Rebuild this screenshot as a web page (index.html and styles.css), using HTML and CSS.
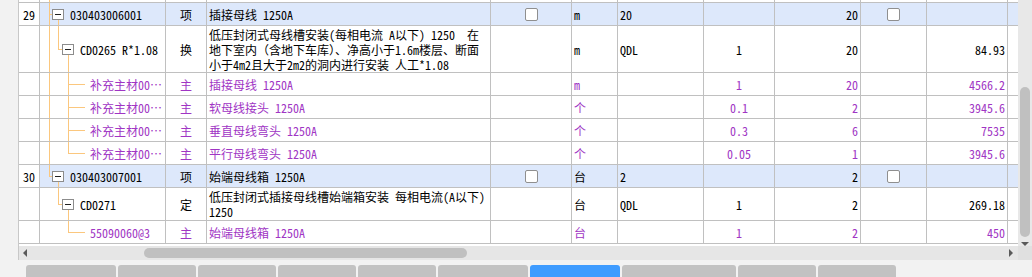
FILE: index.html
```html
<!DOCTYPE html>
<html lang="zh-CN">
<head>
<meta charset="utf-8">
<title>清单</title>
<link rel="stylesheet" href="styles.css">
</head>
<body>
<div class="app">
  <div class="gutter"></div>
  <div class="pane">
    <div class="main">
      <div class="viewport">
        <div class="grid">
          <div class="row sliver">
            <div class="c"></div><div class="c t-pass"></div><div class="c"></div><div class="c"></div><div class="c"></div><div class="c"></div><div class="c"></div><div class="c"></div><div class="c"></div><div class="c"></div><div class="c"></div><div class="c"></div>
          </div>

          <div class="row hl">
            <div class="c num">29</div>
            <div class="c tree l1 t-n1"><span class="box"></span><span>030403006001</span></div>
            <div class="c ctr">项</div>
            <div class="c">插接母线 1250A</div>
            <div class="c ctr"><span class="chk"></span></div>
            <div class="c">m</div>
            <div class="c">20</div>
            <div class="c ctr"></div>
            <div class="c rt">20</div>
            <div class="c ctr"><span class="chk"></span></div>
            <div class="c rt"></div>
            <div class="c"></div>
          </div>

          <div class="row r47">
            <div class="c num"></div>
            <div class="c tree l2 t-n2"><span class="box"></span><span>CD0265 R*1.08</span></div>
            <div class="c ctr">换</div>
            <div class="c wrap">低压封闭式母线槽安装(每相电流 A以下) 1250&nbsp;&nbsp;在<br>地下室内（含地下车库）、净高小于1.6m楼层、断面<br>小于4m2且大于2m2的洞内进行安装 人工*1.08</div>
            <div class="c"></div>
            <div class="c">m</div>
            <div class="c">QDL</div>
            <div class="c ctr">1</div>
            <div class="c rt">20</div>
            <div class="c"></div>
            <div class="c rt">84.93</div>
            <div class="c"></div>
          </div>

          <div class="row mat">
            <div class="c num"></div>
            <div class="c tree l3 t-leaf">补充主材00…</div>
            <div class="c ctr">主</div>
            <div class="c">插接母线 1250A</div>
            <div class="c"></div>
            <div class="c">m</div>
            <div class="c"></div>
            <div class="c ctr">1</div>
            <div class="c rt">20</div>
            <div class="c"></div>
            <div class="c rt">4566.2</div>
            <div class="c"></div>
          </div>

          <div class="row mat">
            <div class="c num"></div>
            <div class="c tree l3 t-leaf">补充主材00…</div>
            <div class="c ctr">主</div>
            <div class="c">软母线接头 1250A</div>
            <div class="c"></div>
            <div class="c">个</div>
            <div class="c"></div>
            <div class="c ctr">0.1</div>
            <div class="c rt">2</div>
            <div class="c"></div>
            <div class="c rt">3945.6</div>
            <div class="c"></div>
          </div>

          <div class="row mat">
            <div class="c num"></div>
            <div class="c tree l3 t-leaf">补充主材00…</div>
            <div class="c ctr">主</div>
            <div class="c">垂直母线弯头 1250A</div>
            <div class="c"></div>
            <div class="c">个</div>
            <div class="c"></div>
            <div class="c ctr">0.3</div>
            <div class="c rt">6</div>
            <div class="c"></div>
            <div class="c rt">7535</div>
            <div class="c"></div>
          </div>

          <div class="row mat">
            <div class="c num"></div>
            <div class="c tree l3 t-leaflast">补充主材00…</div>
            <div class="c ctr">主</div>
            <div class="c">平行母线弯头 1250A</div>
            <div class="c"></div>
            <div class="c">个</div>
            <div class="c"></div>
            <div class="c ctr">0.05</div>
            <div class="c rt">1</div>
            <div class="c"></div>
            <div class="c rt">3945.6</div>
            <div class="c"></div>
          </div>

          <div class="row hl">
            <div class="c num">30</div>
            <div class="c tree l1 t-n1last"><span class="box"></span><span>030403007001</span></div>
            <div class="c ctr">项</div>
            <div class="c">始端母线箱 1250A</div>
            <div class="c ctr"><span class="chk"></span></div>
            <div class="c">台</div>
            <div class="c">2</div>
            <div class="c ctr"></div>
            <div class="c rt">2</div>
            <div class="c ctr"><span class="chk"></span></div>
            <div class="c rt"></div>
            <div class="c"></div>
          </div>

          <div class="row r33">
            <div class="c num"></div>
            <div class="c tree l2 t-n2b"><span class="box"></span><span>CD0271</span></div>
            <div class="c ctr">定</div>
            <div class="c wrap">低压封闭式插接母线槽始端箱安装 每相电流(A以下)<br>1250</div>
            <div class="c"></div>
            <div class="c">台</div>
            <div class="c">QDL</div>
            <div class="c ctr">1</div>
            <div class="c rt">2</div>
            <div class="c"></div>
            <div class="c rt">269.18</div>
            <div class="c"></div>
          </div>

          <div class="row mat">
            <div class="c num"></div>
            <div class="c tree l3 t-leafb">55090060@3</div>
            <div class="c ctr">主</div>
            <div class="c">始端母线箱 1250A</div>
            <div class="c"></div>
            <div class="c">台</div>
            <div class="c"></div>
            <div class="c ctr">1</div>
            <div class="c rt">2</div>
            <div class="c"></div>
            <div class="c rt">450</div>
            <div class="c"></div>
          </div>
        </div>
        <div class="filler"></div>
        <div class="hscroll">
          <svg class="arr-l" width="4" height="8" viewBox="0 0 4 8"><path d="M4 0V8L0 4Z" fill="#5a5a5a"/></svg>
          <div class="hthumb"></div>
          <div class="grow"></div>
          <svg class="arr-r" width="4" height="8" viewBox="0 0 4 8"><path d="M0 0V8L4 4Z" fill="#5a5a5a"/></svg>
        </div>
      </div>
      <div class="vscroll">
        <div class="vtrack">
          <div class="vthumb"></div>
          <svg class="arr-d" width="8" height="4" viewBox="0 0 8 4"><path d="M0 0H8L4 4Z" fill="#5a5a5a"/></svg>
        </div>
        <div class="corner"></div>
      </div>
    </div>
    <div class="sep"></div>
    <div class="tabs">
      <div class="tab w90"></div>
      <div class="tab"></div>
      <div class="tab"></div>
      <div class="tab"></div>
      <div class="tab"></div>
      <div class="tab w90"></div>
      <div class="tab w90 active"></div>
      <div class="tab w114"></div>
      <div class="tab"></div>
      <div class="tab"></div>
    </div>
  </div>
</div>
</body>
</html>
```

FILE: styles.css
```css
:root {
  --line: #c0c0c0;
  --tree: #fbc77e;
}

* { box-sizing: border-box; }

html, body {
  margin: 0;
  padding: 0;
}

body {
  width: 1032px;
  height: 277px;
  overflow: hidden;
  background: #f2f2f2;
  font-family: "Noto Sans Mono CJK SC", "Noto Sans CJK SC", monospace;
  font-size: 12px;
  color: #000;
}

.app {
  display: flex;
  height: 277px;
}

.gutter {
  width: 18px;
  flex: none;
  background: #f2f2f2;
}

.pane {
  width: 1014px;
  display: flex;
  flex-direction: column;
}

.main {
  display: flex;
  height: 265px;
  border-left: 1px solid #c8c8c8;
}

.viewport {
  width: 999px;
  display: flex;
  flex-direction: column;
  background: #fff;
}

.row {
  display: grid;
  grid-template-columns: 21px 126px 41px 284px 81px 46px 86px 71px 86px 66px 81px 10px;
  height: 23px;
}

.row.sliver { height: 3px; }
.row.r47 { height: 47px; }
.row.r33 { height: 33px; }

.row.hl { background: #dde8fb; }
.row.hl .num { background: #fff; }

.row.mat { color: #a035c4; }

.c {
  border-right: 1px solid var(--line);
  border-bottom: 1px solid var(--line);
  display: flex;
  align-items: center;
  padding: 0 2px;
  overflow: hidden;
  white-space: nowrap;
  line-height: 15px;
}

.c:last-child { border-right: none; }

.c.num { padding-left: 4px; }
.c.ctr { justify-content: center; }
.c.rt { justify-content: flex-end; padding-right: 2px; }
.c.wrap { white-space: normal; padding-left: 2px; }

/* tree column */
.tree { padding-left: 0; }
.tree.l1 { padding-left: 12px; }
.tree.l2 { padding-left: 22px; }
.tree.l3 { padding-left: 50px; }

.box {
  width: 12px;
  height: 11px;
  flex: none;
  border: 1px solid #8c8c8c;
  background: #fff;
  margin-right: 6px;
  display: flex;
  align-items: center;
  justify-content: center;
}

.box::before {
  content: "";
  width: 6px;
  height: 1px;
  background: #222;
}

.t-pass {
  background: linear-gradient(var(--tree), var(--tree)) 9px 0 / 1px 100% no-repeat;
}

.t-n1 {
  background:
    linear-gradient(var(--tree), var(--tree)) 9px 0 / 1px 100% no-repeat,
    linear-gradient(var(--tree), var(--tree)) 9px 50% / 3px 1px no-repeat,
    linear-gradient(var(--tree), var(--tree)) 18px 100% / 1px 50% no-repeat;
}

.t-n1last {
  background:
    linear-gradient(var(--tree), var(--tree)) 9px 0 / 1px 50% no-repeat,
    linear-gradient(var(--tree), var(--tree)) 9px 50% / 3px 1px no-repeat,
    linear-gradient(var(--tree), var(--tree)) 18px 100% / 1px 50% no-repeat;
}

.t-n2 {
  background:
    linear-gradient(var(--tree), var(--tree)) 9px 0 / 1px 100% no-repeat,
    linear-gradient(var(--tree), var(--tree)) 18px 0 / 1px 50% no-repeat,
    linear-gradient(var(--tree), var(--tree)) 18px 50% / 4px 1px no-repeat,
    linear-gradient(var(--tree), var(--tree)) 28px 100% / 1px 50% no-repeat;
}

.t-n2b {
  background:
    linear-gradient(var(--tree), var(--tree)) 18px 0 / 1px 50% no-repeat,
    linear-gradient(var(--tree), var(--tree)) 18px 50% / 4px 1px no-repeat,
    linear-gradient(var(--tree), var(--tree)) 28px 100% / 1px 50% no-repeat;
}

.t-leaf {
  background:
    linear-gradient(var(--tree), var(--tree)) 9px 0 / 1px 100% no-repeat,
    linear-gradient(var(--tree), var(--tree)) 28px 0 / 1px 100% no-repeat,
    linear-gradient(var(--tree), var(--tree)) 28px 50% / 17px 1px no-repeat;
}

.t-leaflast {
  background:
    linear-gradient(var(--tree), var(--tree)) 9px 0 / 1px 100% no-repeat,
    linear-gradient(var(--tree), var(--tree)) 28px 0 / 1px 50% no-repeat,
    linear-gradient(var(--tree), var(--tree)) 28px 50% / 17px 1px no-repeat;
}

.t-leafb {
  background:
    linear-gradient(var(--tree), var(--tree)) 28px 0 / 1px 50% no-repeat,
    linear-gradient(var(--tree), var(--tree)) 28px 50% / 17px 1px no-repeat;
}

.chk {
  width: 13px;
  height: 13px;
  border: 1px solid #8f8f8f;
  border-radius: 2px;
  background: #fff;
}

.filler {
  flex: 1;
  background: #fff;
}

.hscroll {
  height: 14px;
  background: #e6e6e6;
  display: flex;
  align-items: center;
}

.arr-l { margin-left: 4px; flex: none; }
.arr-r { margin-right: 5px; flex: none; }

.hthumb {
  margin-left: 117px;
  width: 323px;
  height: 10px;
  border-radius: 5px;
  background: #c0c0c0;
}

.grow { flex: 1; }

.vscroll {
  width: 14px;
  display: flex;
  flex-direction: column;
}

.vtrack {
  flex: 1;
  background: #e8e8e8;
  display: flex;
  flex-direction: column;
  align-items: center;
}

.vthumb {
  margin-top: 87px;
  width: 10px;
  height: 150px;
  border-radius: 5px;
  background: #c0c0c0;
}

.arr-d {
  margin-top: 5px;
}

.corner {
  height: 14px;
  background: #e0e0e0;
}

.sep {
  height: 2px;
  background: #c6c6c6;
}

.tabs {
  display: flex;
  gap: 2px;
  padding: 5px 0 0 8px;
}

.tab {
  width: 78px;
  height: 20px;
  flex: none;
  border-radius: 3px 3px 0 0;
  background: #c2c2c2;
}

.tab.w90 { width: 90px; }
.tab.w114 { width: 114px; }
.tab.active { background: #3f9cff; }
```
